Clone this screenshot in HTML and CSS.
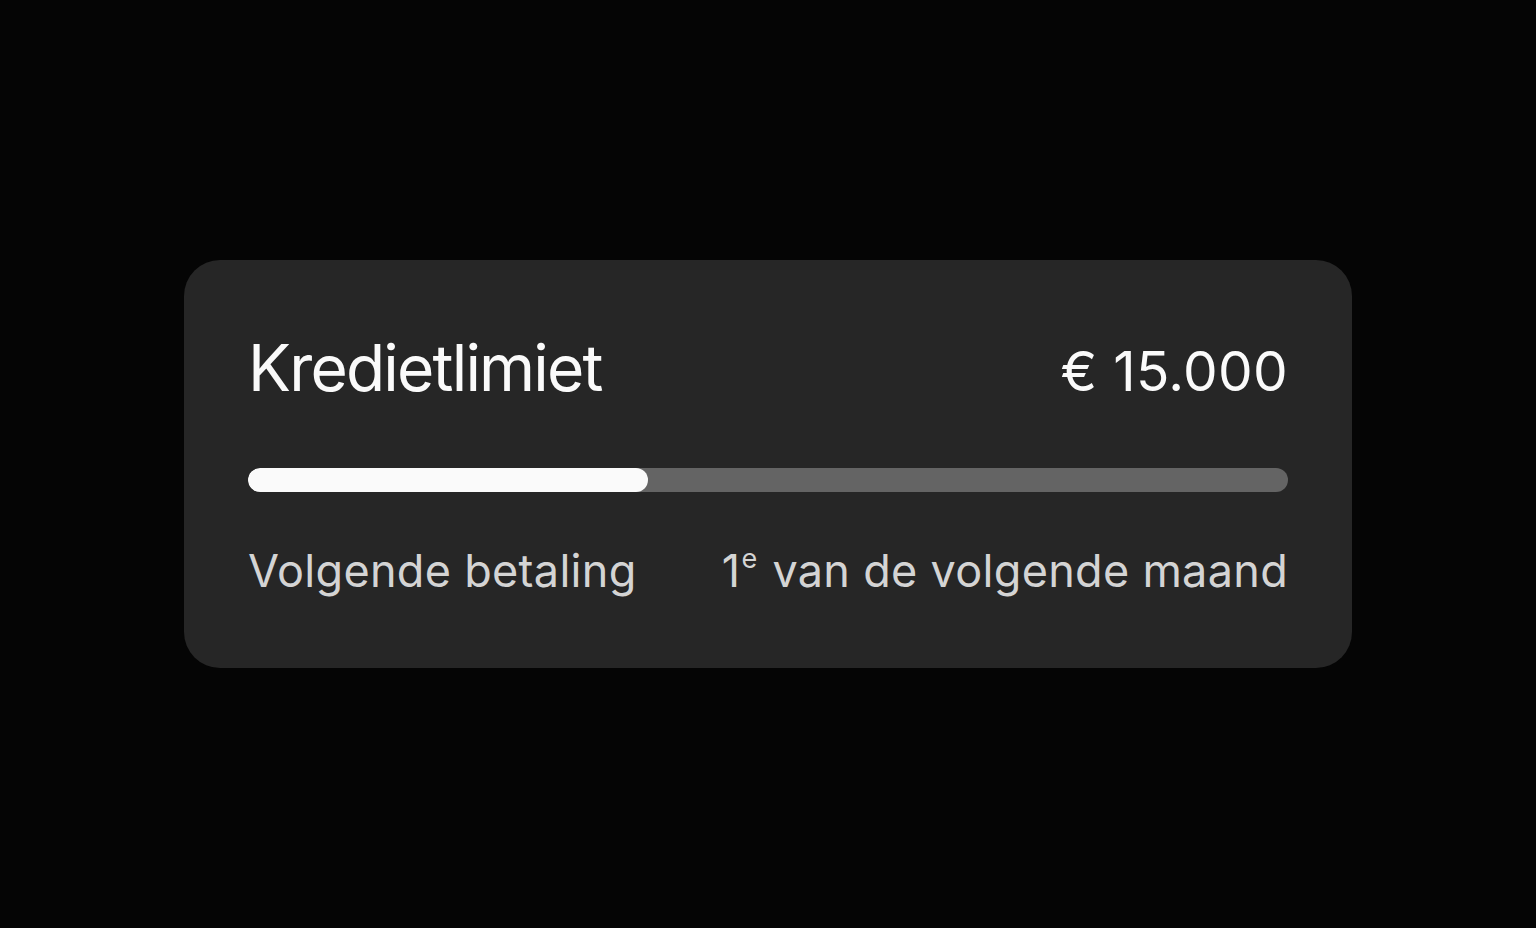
FILE: index.html
```html
<!DOCTYPE html>
<html lang="nl">
<head>
<meta charset="utf-8">
<title>Kredietlimiet</title>
<link rel="stylesheet" href="styles.css">
</head>
<body>
<main class="page">
  <section class="card">
    <div class="row head">
      <h1 class="title">Kredietlimiet</h1>
      <span class="amount">€ 15.000</span>
    </div>
    <div class="bar"><div class="fill" style="width: 38.46%"></div></div>
    <div class="row foot">
      <span class="label">Volgende betaling</span>
      <span class="label">1<sup class="sup">e</sup> van de volgende maand</span>
    </div>
  </section>
</main>
</body>
</html>
```

FILE: styles.css
```css
html, body {
  margin: 0;
  padding: 0;
  background: #050505;
}
.page {
  width: 1536px;
  height: 928px;
  display: flex;
  align-items: center;
  justify-content: center;
  font-family: Inter, "Noto Sans", sans-serif;
}
.card {
  box-sizing: border-box;
  width: 1168px;
  height: 408px;
  background: #262626;
  border-radius: 36px;
  padding: 64px;
  display: flex;
  flex-direction: column;
}
.row {
  display: flex;
  justify-content: space-between;
  align-items: baseline;
  flex-shrink: 0;
}
.head {
  height: 88px;
}
.title {
  margin: 0;
  font-size: 64px;
  font-weight: 400;
  line-height: 88px;
  color: #fafafa;
  letter-spacing: -1.8px;
}
.amount {
  font-size: 55px;
  color: #fafafa;
  line-height: 80px;
  letter-spacing: 0.3px;
}
.bar {
  flex-shrink: 0;
  margin-top: 56px;
  height: 24px;
  border-radius: 12px;
  background: #646464;
  overflow: hidden;
}
.fill {
  height: 100%;
  background: #fafafa;
  border-radius: 12px;
}
.foot {
  margin-top: 46px;
}
.label {
  font-size: 45px;
  line-height: 66px;
  color: #d4d4d4;
  letter-spacing: 0.3px;
}
.sup {
  font-size: 0.6em;
  vertical-align: 0;
  position: relative;
  top: -0.72em;
  line-height: 0;
  margin-left: 1px;
  margin-right: 2px;
}
```
